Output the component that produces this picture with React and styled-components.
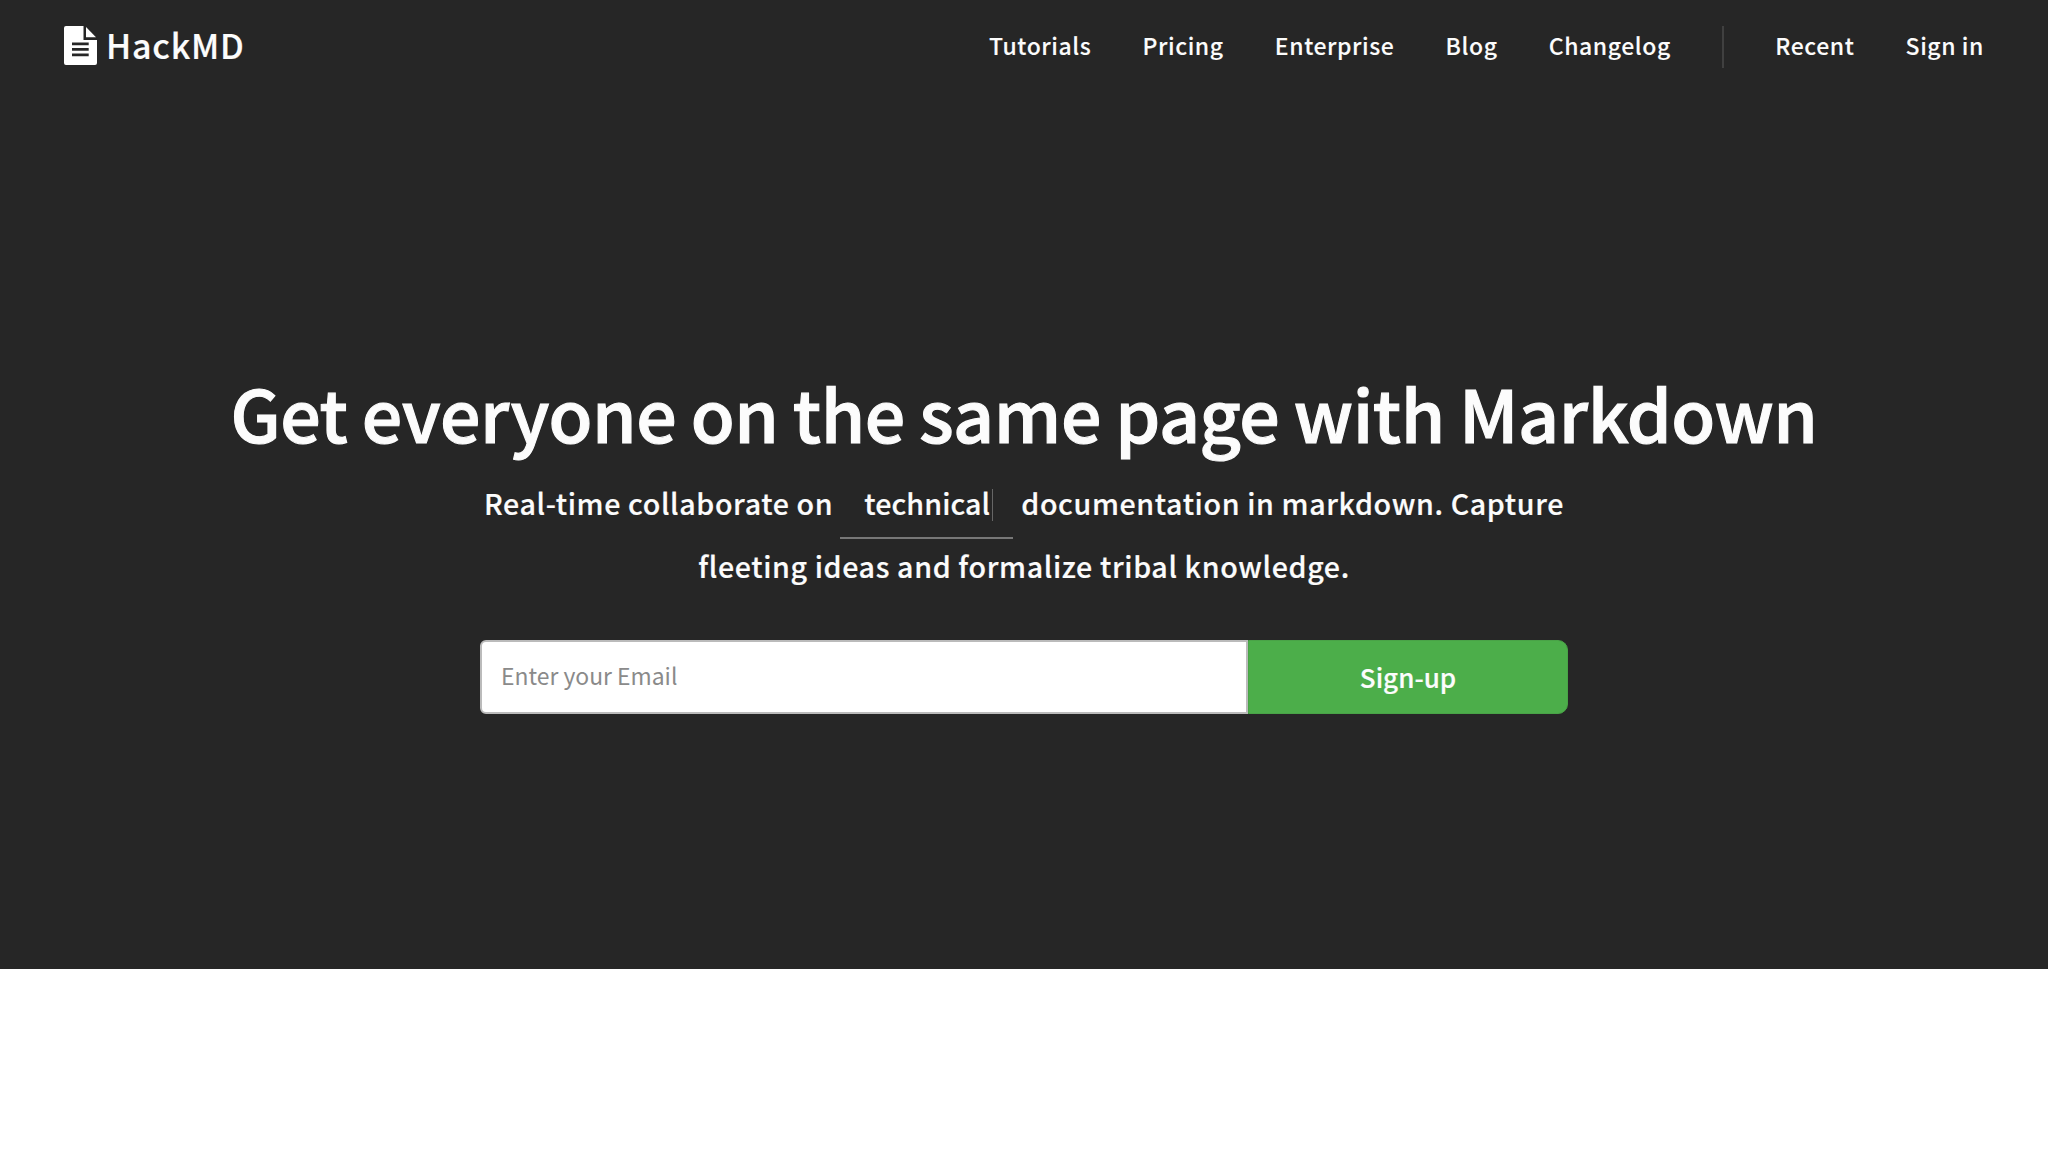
import React from "react";
import styled, { createGlobalStyle } from "styled-components";

const GlobalStyle = createGlobalStyle`
  * {
    box-sizing: border-box;
  }

  body {
    margin: 0;
    background-color: white;
    font-family: "Source Sans Pro", "Noto Sans CJK TC", "Noto Sans", sans-serif;
    -webkit-font-smoothing: antialiased;
  }
`;

const Hero = styled.div`
  height: 969px;
  display: flex;
  flex-direction: column;
  background-color: #262626;
  color: #fcfcfc;
`;

const Navbar = styled.nav`
  height: 90px;
  padding: 0px 64px;
  display: flex;
  align-items: center;
  justify-content: space-between;
`;

const Logo = styled.a`
  display: flex;
  align-items: center;
  gap: 9px;
  font-size: 34px;
  font-weight: 500;
  letter-spacing: 0.8px;
  line-height: 40px;
  -webkit-text-stroke: 0.2px;
`;

const LogoIcon = styled.svg`
  width: 33px;
  height: 39px;
  margin-top: 1px;
  fill: white;
`;

const Menu = styled.div`
  display: flex;
  align-items: center;
`;

const MenuItem = styled.a`
  margin-left: 51.2px;
  font-size: 23px;
  font-weight: 500;
  letter-spacing: 0.57px;
  line-height: 40px;
  -webkit-text-stroke: 0.1px;
`;

const Divider = styled.span`
  width: 2px;
  height: 42px;
  margin: 4px 0px 0px 51.4px;
  background-color: #404040;
`;

const Content = styled.div`
  padding-top: 267px;
  display: flex;
  flex-direction: column;
  align-items: center;
`;

const Title = styled.h1`
  margin: 0;
  font-size: 71.6px;
  font-weight: 500;
  letter-spacing: -0.45px;
  word-spacing: -1.3px;
  line-height: 110px;
  white-space: nowrap;
  -webkit-text-stroke: 1.1px;
`;

const Desc = styled.p`
  margin: 5px 0px 0px;
  font-size: 28.6px;
  font-weight: 500;
  letter-spacing: 0.63px;
  line-height: 62.5px;
  text-align: center;
  white-space: nowrap;
  -webkit-text-stroke: 0.2px;
`;

const Typed = styled.span`
  display: inline-block;
  width: 173px;
  height: 67px;
  margin: 0px 8px -4.5px 7px;
  padding-left: 24px;
  border-bottom: 2px solid #777;
  letter-spacing: 0.1px;
  text-align: left;
  vertical-align: top;
`;

const Cursor = styled.span`
  display: inline-block;
  width: 1px;
  height: 32px;
  margin-left: 2px;
  background-color: #666;
  vertical-align: -6px;
`;

const Form = styled.form`
  width: 1088px;
  height: 74px;
  margin-top: 43px;
  display: flex;
`;

const Input = styled.input`
  flex: 1;
  padding: 0px 19px 4px;
  border: 2px solid #bbb;
  border-radius: 6px 0px 0px 6px;
  background-color: white;
  font-family: inherit;
  font-size: 22.9px;
  outline: none;

  &::placeholder {
    color: #8a8a8a;
  }
`;

const Button = styled.button`
  width: 320px;
  padding: 0px 0px 1px;
  border: 1px solid #49a347;
  border-radius: 0px 10px 10px 0px;
  background-color: #4cae4a;
  color: #fcfcfc;
  font-family: inherit;
  font-size: 26px;
  font-weight: 500;
  -webkit-text-stroke: 0.2px;
  cursor: pointer;
`;

const App = () => {
  return (
    <>
      <GlobalStyle />
      <Hero>
        <Navbar>
          <Logo>
            <LogoIcon viewBox="0 0 33 39">
              <path
                fillRule="evenodd"
                d="M2 0H19.5V14H33V37Q33 39 31 39H2Q0 39 0 37V2Q0 0 2 0ZM8 16.5V19.2H24.7V16.5ZM8 22V24.7H24.7V22ZM8 27.5V30.2H24.7V27.5Z"
              />
              <path d="M22 1L32 11.3H22Z" />
            </LogoIcon>
            HackMD
          </Logo>
          <Menu>
            <MenuItem>Tutorials</MenuItem>
            <MenuItem>Pricing</MenuItem>
            <MenuItem>Enterprise</MenuItem>
            <MenuItem>Blog</MenuItem>
            <MenuItem>Changelog</MenuItem>
            <Divider />
            <MenuItem>Recent</MenuItem>
            <MenuItem>Sign in</MenuItem>
          </Menu>
        </Navbar>
        <Content>
          <Title>Get everyone on the same page with Markdown</Title>
          <Desc>
            Real-time collaborate on
            <Typed>
              technical
              <Cursor />
            </Typed>
            documentation in markdown. Capture
            <br />
            fleeting ideas and formalize tribal knowledge.
          </Desc>
          <Form>
            <Input placeholder="Enter your Email" />
            <Button type="button">Sign-up</Button>
          </Form>
        </Content>
      </Hero>
    </>
  );
};

export default App;
